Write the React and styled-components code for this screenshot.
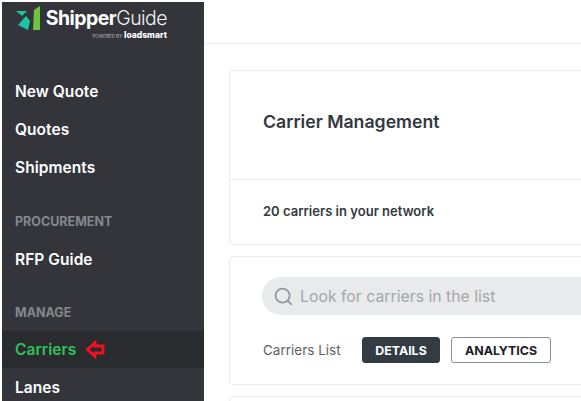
import styled, { createGlobalStyle } from "styled-components";
import { Search } from "lucide-react";

const GlobalStyle = createGlobalStyle`
  html, body {
    margin: 0;
    height: 100%;
    background: #ffffff;
    overflow: hidden;
  }
  * { box-sizing: border-box; }
`;

const Page = styled.div`
  display: flex;
  width: 581px;
  height: 401px;
  padding: 2px 0 0 2px;
  overflow: hidden;
  font-family: Inter, "Noto Sans", sans-serif;
`;

const Sidebar = styled.nav`
  flex: 0 0 202px;
  display: flex;
  flex-direction: column;
  overflow: hidden;
  background: #33353a;
`;

const Brand = styled.div`
  flex: none;
  display: flex;
  gap: 5px;
  height: 70px;
  padding: 4px 0 0 13px;
`;

const BrandText = styled.div`
  display: flex;
  flex-direction: column;
  align-items: flex-end;
  width: 121px;
`;

const BrandName = styled.div`
  font-size: 19.4px;
  line-height: 25px;
  letter-spacing: -0.5px;
  font-weight: 300;
  white-space: nowrap;
  color: #f2f3f4;

  b {
    font-weight: 700;
    color: #ffffff;
  }
`;

const BrandSub = styled.div`
  font-size: 8.5px;
  line-height: 8px;
  font-weight: 800;
  white-space: nowrap;
  color: #ffffff;

  span {
    margin-right: 2px;
    font-size: 4.5px;
    font-weight: 400;
    color: #b9bbbf;
  }
`;

const NavGroup = styled.div`
  flex: none;
  display: flex;
  flex-direction: column;
  margin-bottom: ${({ $gap }) => $gap || 0}px;
`;

const GroupTitle = styled.div`
  height: 36px;
  padding-left: 13px;
  font-size: 12.5px;
  line-height: 36px;
  font-weight: 700;
  color: #83878f;
`;

const NavItem = styled.a`
  display: flex;
  align-items: center;
  gap: 10px;
  height: ${({ $active }) => ($active ? 37 : 38)}px;
  padding-left: 13px;
  font-size: 15.5px;
  font-weight: 600;
  letter-spacing: 0.05px;
  color: ${({ $active }) => ($active ? "#2fc25b" : "#ffffff")};
  background: ${({ $active }) => ($active ? "#2a2b2e" : "transparent")};
`;

const Main = styled.main`
  flex: 1;
  min-width: 0;
  display: flex;
  flex-direction: column;
`;

const Header = styled.header`
  flex: 0 0 42px;
  border-bottom: 1px solid #ececed;
`;

const Content = styled.div`
  display: flex;
  flex-direction: column;
  gap: 11px;
  padding: 26px 0 0 25px;
  margin-right: -20px;
`;

const Card = styled.section`
  flex: none;
  height: ${({ $height }) => $height}px;
  border: 1px solid #ececed;
  border-radius: 4px;
  background: #ffffff;
`;

const TitleRow = styled.div`
  display: flex;
  align-items: center;
  height: 109px;
  padding: 0 0 8px 33px;
  border-bottom: 1px solid #ececed;
`;

const Title = styled.h1`
  margin: 0;
  font-size: 17.7px;
  font-weight: 600;
  color: #33383f;
`;

const CountRow = styled.div`
  display: flex;
  align-items: center;
  height: 62px;
  padding-left: 33px;
  font-size: 13px;
  font-weight: 600;
  letter-spacing: 0.02px;
  color: #33383f;
`;

const ListCard = styled.div`
  display: flex;
  flex-direction: column;
  gap: 22px;
  padding: 20px 0 0 32px;
`;

const SearchBar = styled.div`
  display: flex;
  align-items: center;
  gap: 6px;
  height: 38px;
  padding-left: 11px;
  border-radius: 19px;
  background: #e9eaec;
  font-size: 15.8px;
  color: #a3a6ab;

  svg {
    flex: none;
    color: #94979c;
  }
`;

const ViewRow = styled.div`
  display: flex;
  align-items: center;
  gap: 11px;
`;

const ViewLabel = styled.span`
  width: 78px;
  margin: 0 10px 0 1px;
  font-size: 13.5px;
  white-space: nowrap;
  color: #5e6268;
`;

const ViewButton = styled.button`
  height: 26px;
  padding: 0;
  width: ${({ $width }) => $width}px;
  border: 1px solid ${({ $active }) => ($active ? "#343b43" : "#8a9097")};
  border-radius: 3px;
  font-family: inherit;
  font-size: 12.4px;
  font-weight: 700;
  color: ${({ $active }) => ($active ? "#ffffff" : "#1c2025")};
  background: ${({ $active }) => ($active ? "#343b43" : "#ffffff")};
`;

function BrandMark() {
  return (
    <svg width="26" height="25" viewBox="0 0 26 25" style={{ flex: "none" }}>
      <defs>
        <linearGradient id="markLow" x1="0" y1="1" x2="1" y2="0">
          <stop offset="0" stopColor="#12b5c9" />
          <stop offset="1" stopColor="#27d08a" />
        </linearGradient>
      </defs>
      <path d="M1 5h11l-5 5z" fill="#19c7a0" />
      <path d="M3 19l8-9 4 5-2 9z" fill="url(#markLow)" />
      <path d="M19 4l6-4v24h-7z" fill="#6fc43f" />
    </svg>
  );
}

function RedArrow() {
  return (
    <svg width="19" height="19" viewBox="0 0 19 19">
      <path
        d="M1.5 9.5L9 2.5V6h8v7H9v3.5z"
        fill="none"
        stroke="#f5101f"
        strokeWidth="2.8"
      />
    </svg>
  );
}

export default function App() {
  return (
    <Page>
      <GlobalStyle />
      <Sidebar>
        <Brand>
          <BrandMark />
          <BrandText>
            <BrandName>
              <b>Shipper</b>Guide
            </BrandName>
            <BrandSub>
              <span>POWERED BY</span>loadsmart
            </BrandSub>
          </BrandText>
        </Brand>
        <NavGroup $gap={18}>
          <NavItem>New Quote</NavItem>
          <NavItem>Quotes</NavItem>
          <NavItem>Shipments</NavItem>
        </NavGroup>
        <NavGroup $gap={17}>
          <GroupTitle>PROCUREMENT</GroupTitle>
          <NavItem>RFP Guide</NavItem>
        </NavGroup>
        <NavGroup>
          <GroupTitle>MANAGE</GroupTitle>
          <NavItem $active>
            Carriers
            <RedArrow />
          </NavItem>
          <NavItem>Lanes</NavItem>
        </NavGroup>
      </Sidebar>
      <Main>
        <Header />
        <Content>
          <Card $height={175}>
            <TitleRow>
              <Title>Carrier Management</Title>
            </TitleRow>
            <CountRow>20 carriers in your network</CountRow>
          </Card>
          <Card $height={129}>
            <ListCard>
              <SearchBar>
                <Search size={21} strokeWidth={2} />
                Look for carriers in the list
              </SearchBar>
              <ViewRow>
                <ViewLabel>Carriers List</ViewLabel>
                <ViewButton $active $width={78}>DETAILS</ViewButton>
                <ViewButton $width={100}>ANALYTICS</ViewButton>
              </ViewRow>
            </ListCard>
          </Card>
          <Card $height={40} />
        </Content>
      </Main>
    </Page>
  );
}
